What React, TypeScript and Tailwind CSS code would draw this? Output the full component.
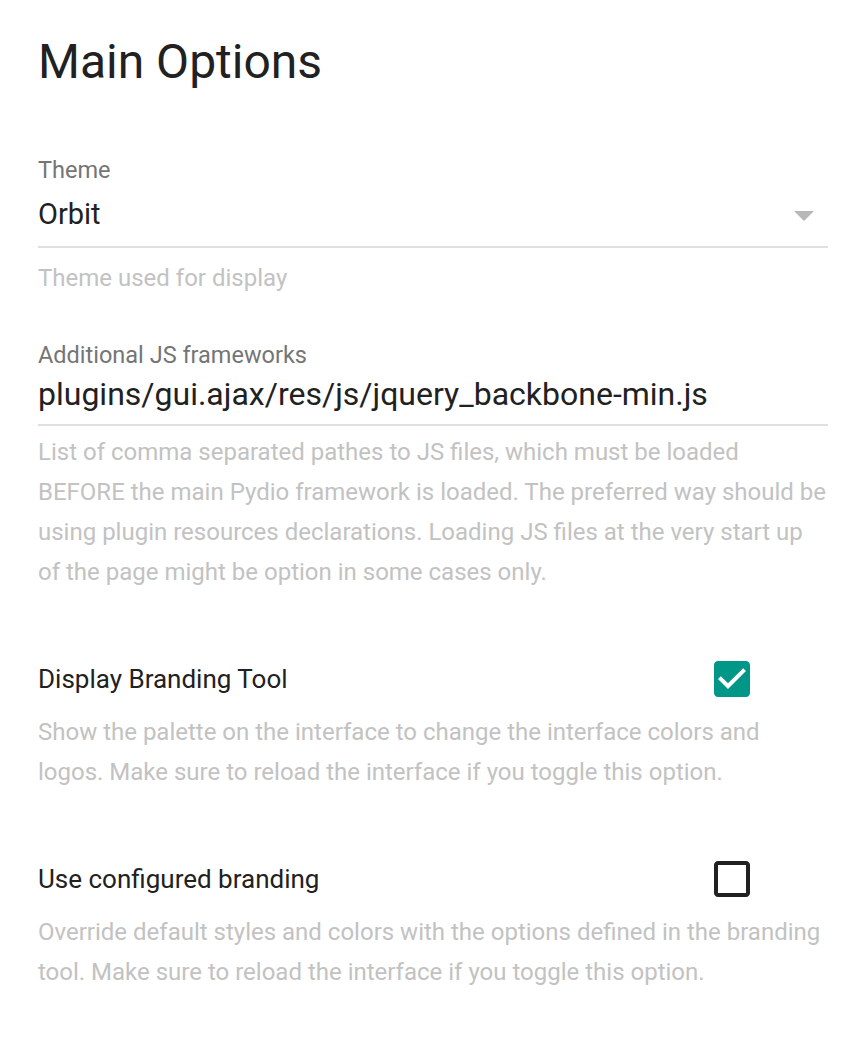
import React, { useState } from 'react';

const font = { fontFamily: 'Roboto, "Noto Sans", sans-serif' };

const Field = ({ label, value, help, select, big }: { label: string; value: string; help: string; select?: boolean; big?: boolean }) => (
  <div>
    <div className="text-[23.5px] leading-[28px] text-[#757575]">{label}</div>
    <div className={`flex items-center justify-between border-b-2 border-[#e0e0e0] ${big ? 'h-[57px] pb-[6px]' : 'h-[64px]'}`}>
      <span className={`${big ? 'text-[32px]' : 'text-[29px]'} text-[#212121]`}>{value}</span>
      {select && (
        <svg width="48" height="48" viewBox="0 0 24 24">
          <path d="M7 10l5 5 5-5z" fill="#b8b8b8" />
        </svg>
      )}
    </div>
    <p className={`${big ? 'mt-[6px]' : 'mt-[10px]'} text-[24px] leading-[40px] text-[#c2c2c2]`}>{help}</p>
  </div>
);

const Toggle = ({ label, help, initial }: { label: string; help: string; initial: boolean }) => {
  const [checked, setChecked] = useState(initial);
  return (
    <div className="mt-[62px]">
      <div className="flex items-center justify-between pr-[72px] h-[50px]">
        <span className="text-[26px] text-[#212121]">{label}</span>
        <button onClick={() => setChecked(!checked)} className="w-[48px] h-[48px]">
          {checked ? (
            <svg width="48" height="48" viewBox="0 0 24 24">
              <path
                d="M19 3H5c-1.11 0-2 .9-2 2v14c0 1.1.89 2 2 2h14c1.11 0 2-.9 2-2V5c0-1.1-.89-2-2-2zm-9 14l-5-5 1.41-1.41L10 14.17l7.59-7.59L19 8l-9 9z"
                fill="#009688"
              />
            </svg>
          ) : (
            <svg width="48" height="48" viewBox="0 0 24 24">
              <path
                d="M19 5v14H5V5h14m0-2H5c-1.1 0-2 .9-2 2v14c0 1.1.9 2 2 2h14c1.1 0 2-.9 2-2V5c0-1.1-.9-2-2-2z"
                fill="#212121"
              />
            </svg>
          )}
        </button>
      </div>
      <p className="mt-[8px] text-[24px] leading-[40px] text-[#c2c2c2]">{help}</p>
    </div>
  );
};

export default function App() {
  return (
    <div className="bg-white min-h-[1040px] px-[38px] pt-[30px] w-[866px]" style={font}>
      <h1 className="text-[48px] leading-[64px] text-[#212121] mb-[62px]">Main Options</h1>
      <Field label="Theme" value="Orbit" help="Theme used for display" select />
      <div className="h-[43px]" />
      <Field
        label="Additional JS frameworks"
        value="plugins/gui.ajax/res/js/jquery_backbone-min.js"
        big
        help="List of comma separated pathes to JS files, which must be loaded BEFORE the main Pydio framework is loaded. The preferred way should be using plugin resources declarations. Loading JS files at the very start up of the page might be option in some cases only."
      />
      <Toggle
        label="Display Branding Tool"
        initial={true}
        help="Show the palette on the interface to change the interface colors and logos. Make sure to reload the interface if you toggle this option."
      />
      <Toggle
        label="Use configured branding"
        initial={false}
        help="Override default styles and colors with the options defined in the branding tool. Make sure to reload the interface if you toggle this option."
      />
    </div>
  );
}
